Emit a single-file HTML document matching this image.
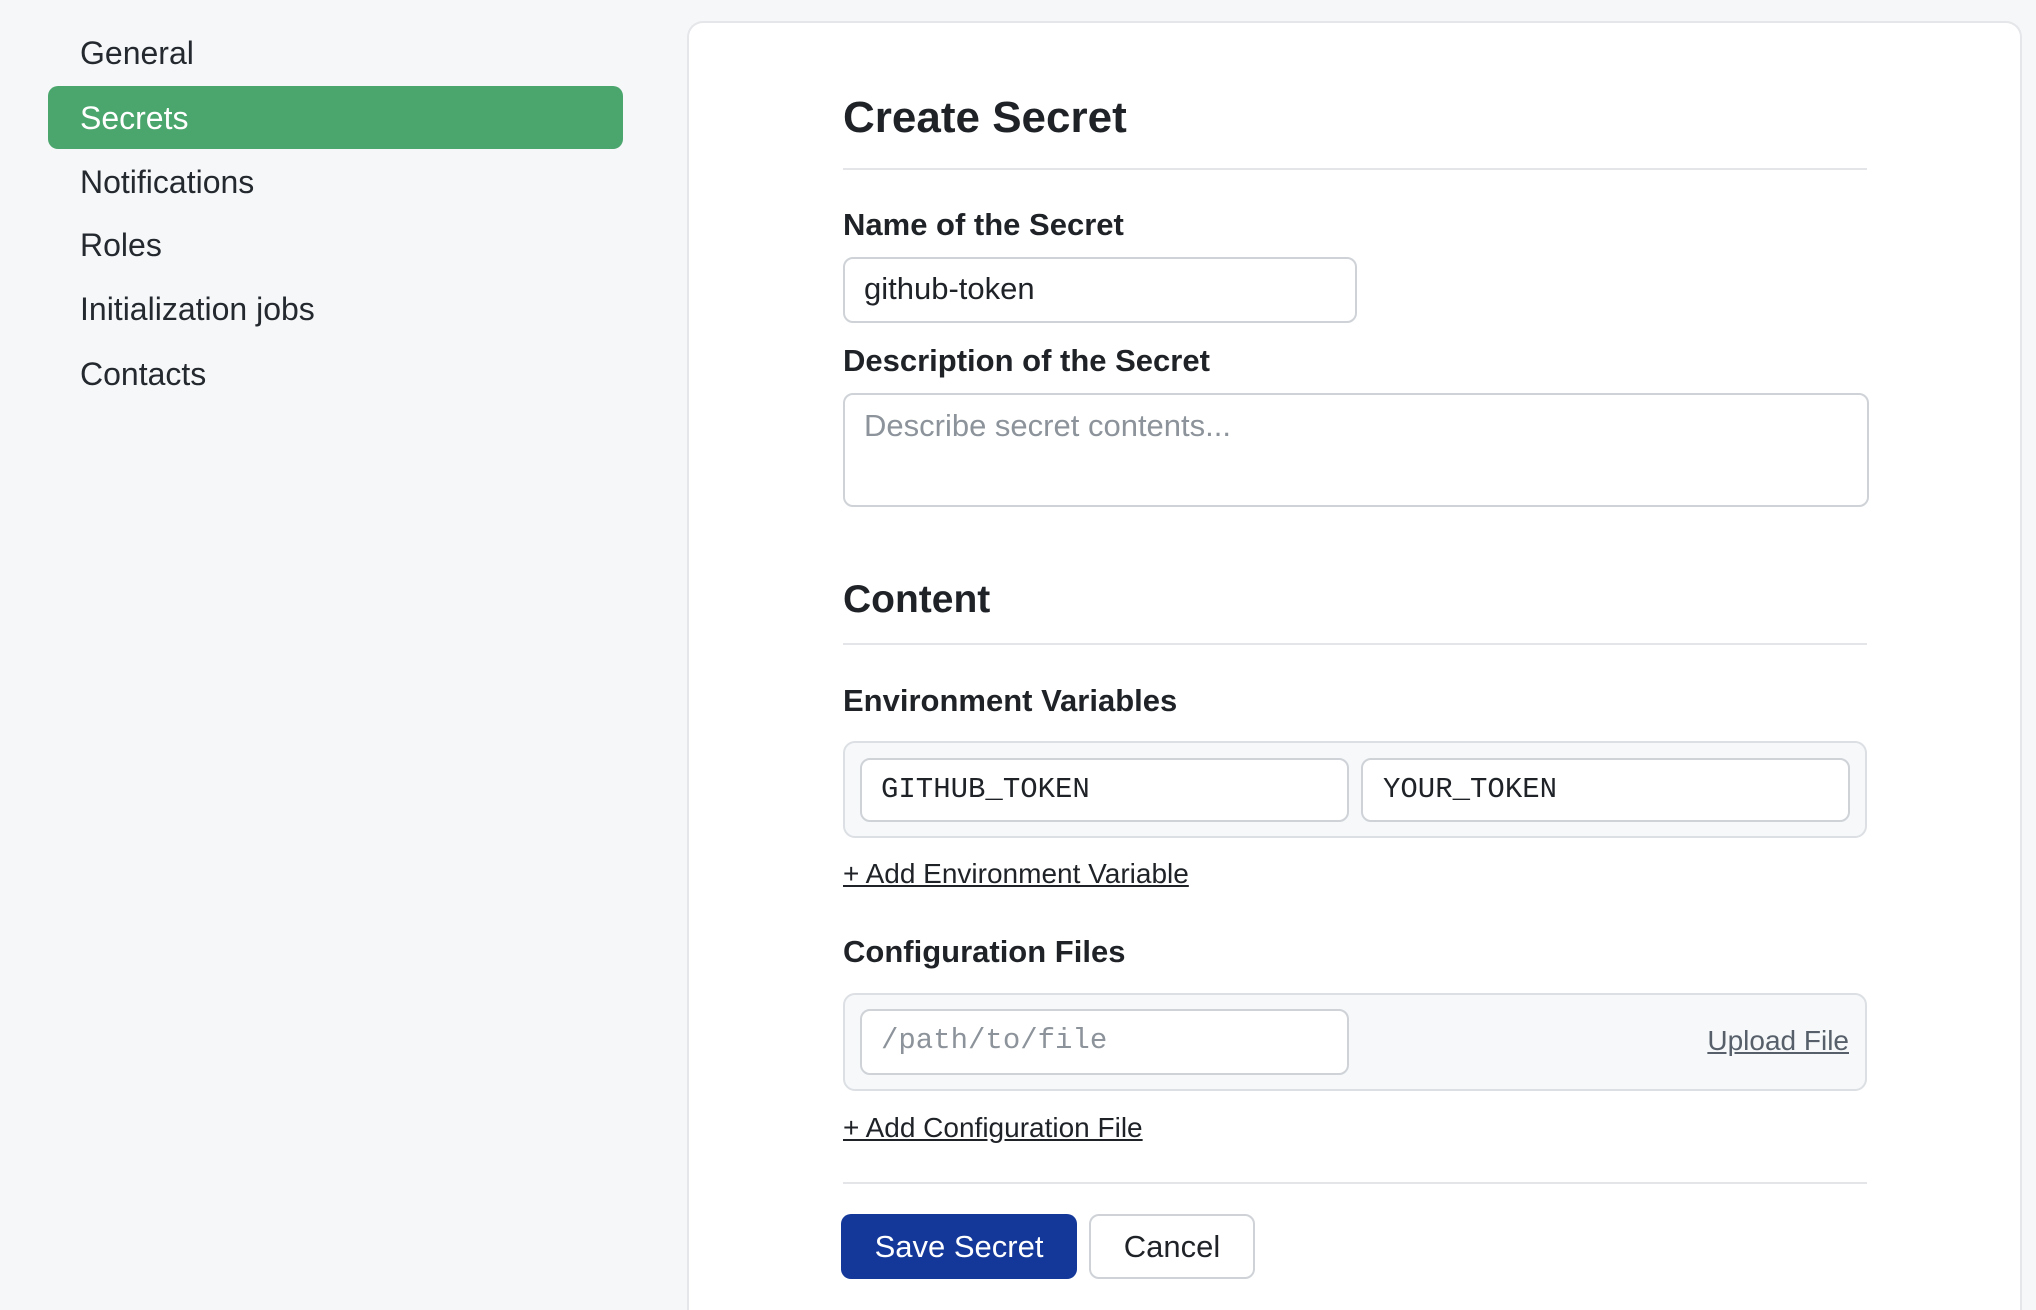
<!DOCTYPE html>
<html style="height:1310px;overflow:hidden"><head><meta charset="utf-8"><style>
*{box-sizing:border-box;margin:0;padding:0}
body{width:2036px;height:1310px;background:#f6f7f9;font-family:"Liberation Sans",sans-serif;color:#1f2328;position:relative;overflow:hidden}
.a{position:absolute}
.nav{left:80px;font-size:32px;line-height:40px;color:#24292f}
.sel{left:48px;top:86px;width:575px;height:63px;background:#4aa66d;border-radius:10px}
.card{left:687px;top:21px;width:1335px;height:1289px;background:#fff;border:2px solid #e4e6e9;border-bottom:none;border-radius:16px 16px 0 0}
.h1{font-size:44px;font-weight:bold}
.lbl{font-size:31px;font-weight:bold;line-height:36px}
.hr{left:843px;width:1024px;height:2px;background:#e3e5e8}
.inp{background:#fff;border:2px solid #cfd3d8;border-radius:10px}
.mono{font-family:"Liberation Mono",monospace;font-size:29px}
.lnk{font-size:28px;text-decoration:underline;color:#1f2328}
.box{background:#f6f8fa;border:2px solid #dcdfe3;border-radius:12px}
</style></head><body>
<div class="a sel"></div>
<div class="a nav" style="top:33px">General</div>
<div class="a nav" style="top:98px;color:#fff">Secrets</div>
<div class="a nav" style="top:162px">Notifications</div>
<div class="a nav" style="top:225px">Roles</div>
<div class="a nav" style="top:289px">Initialization jobs</div>
<div class="a nav" style="top:354px">Contacts</div>

<div class="a card"></div>
<div class="a h1" style="left:843px;top:93px">Create Secret</div>
<div class="a hr" style="top:168px"></div>
<div class="a lbl" style="left:843px;top:207px">Name of the Secret</div>
<div class="a inp" style="left:843px;top:257px;width:514px;height:66px"></div>
<div class="a" style="left:864px;top:271px;font-size:31px;line-height:36px">github-token</div>
<div class="a lbl" style="left:843px;top:343px">Description of the Secret</div>
<div class="a inp" style="left:843px;top:393px;width:1026px;height:114px"></div>
<div class="a" style="left:864px;top:408px;font-size:31px;line-height:36px;color:#8c939a">Describe secret contents...</div>
<div class="a h1" style="left:843px;top:578px;font-size:39px">Content</div>
<div class="a hr" style="top:643px"></div>
<div class="a lbl" style="left:843px;top:683px">Environment Variables</div>
<div class="a box" style="left:843px;top:741px;width:1024px;height:97px"></div>
<div class="a inp" style="left:860px;top:758px;width:489px;height:64px"></div>
<div class="a inp" style="left:1361px;top:758px;width:489px;height:64px"></div>
<div class="a mono" style="left:881px;top:773px;line-height:34px">GITHUB_TOKEN</div>
<div class="a mono" style="left:1383px;top:773px;line-height:34px">YOUR_TOKEN</div>
<div class="a lnk" style="left:843px;top:858px">+ Add Environment Variable</div>
<div class="a lbl" style="left:843px;top:934px">Configuration Files</div>
<div class="a box" style="left:843px;top:993px;width:1024px;height:98px"></div>
<div class="a inp" style="left:860px;top:1009px;width:489px;height:66px"></div>
<div class="a mono" style="left:881px;top:1024px;line-height:34px;color:#8c939a">/path/to/file</div>
<div class="a lnk" style="right:187px;top:1025px;color:#57606a">Upload File</div>
<div class="a lnk" style="left:843px;top:1112px">+ Add Configuration File</div>
<div class="a hr" style="top:1182px"></div>
<div class="a" style="left:841px;top:1214px;width:236px;height:65px;background:#14389a;border-radius:10px;color:#fff;font-size:31px;line-height:65px;text-align:center">Save Secret</div>
<div class="a inp" style="left:1089px;top:1214px;width:166px;height:65px;font-size:31px;line-height:61px;text-align:center">Cancel</div>
</body></html>
